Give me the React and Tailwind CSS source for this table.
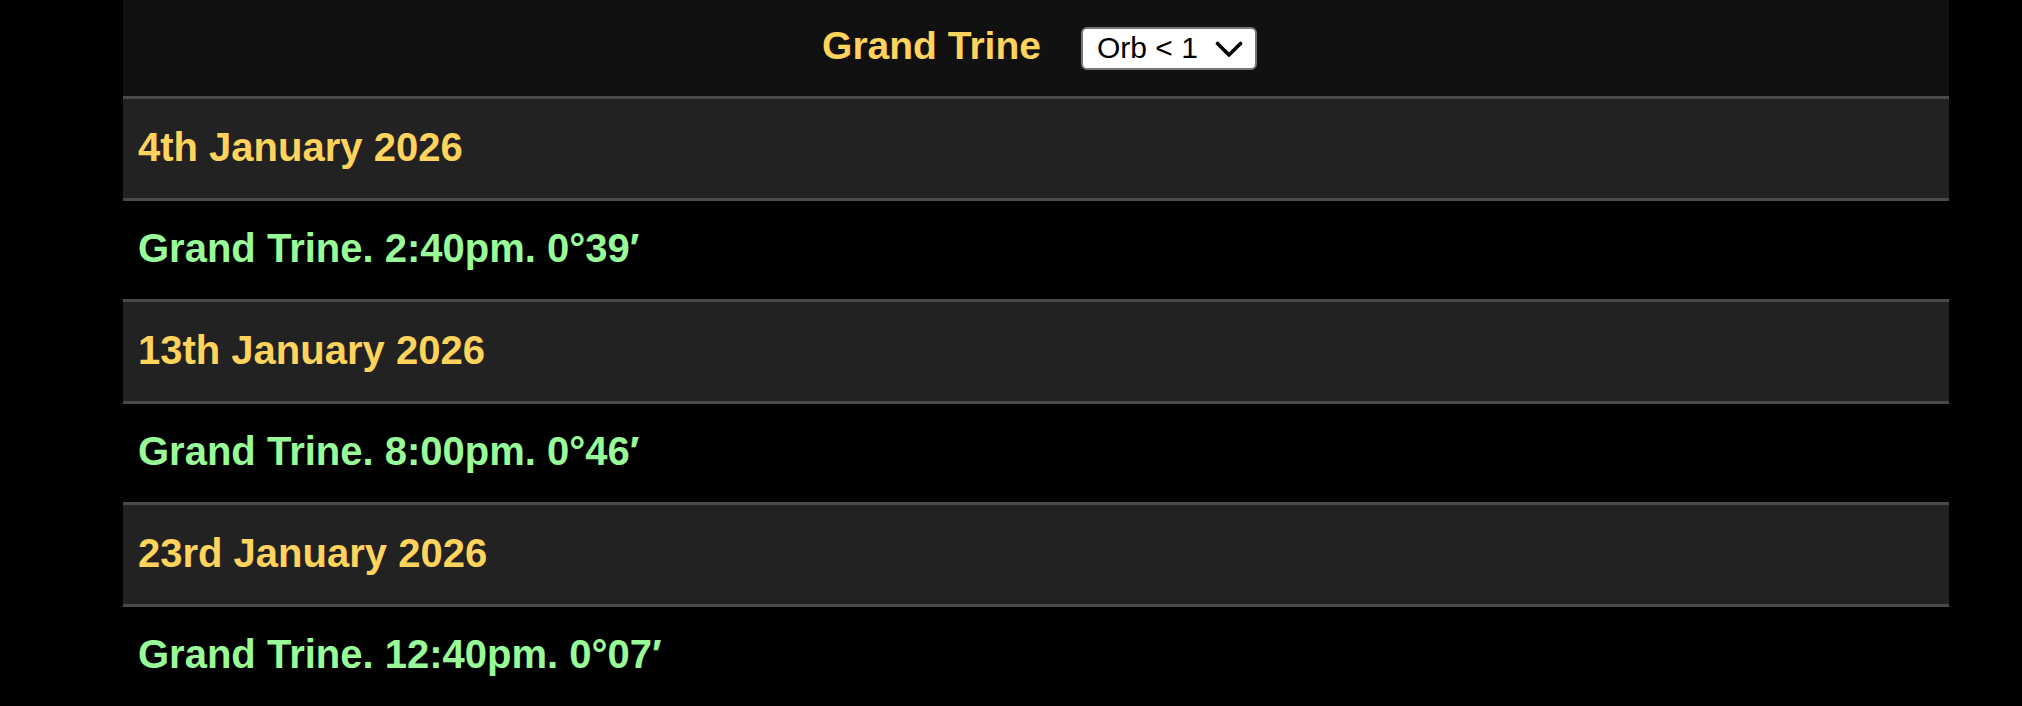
import React from "react";

const events = [
  { date: "4th January 2026", text: "Grand Trine. 2:40pm. 0°39′" },
  { date: "13th January 2026", text: "Grand Trine. 8:00pm. 0°46′" },
  { date: "23rd January 2026", text: "Grand Trine. 12:40pm. 0°07′" },
];

export default function App() {
  return (
    <div
      className="min-h-screen bg-black"
      style={{ fontFamily: '"Liberation Sans", Arial, sans-serif' }}
    >
      <div className="ml-[123px] w-[1826px]">
        <div className="flex h-[96px] items-center justify-center gap-[40px] bg-[#111111] pl-[7px]">
          <h1 className="text-[39px] font-bold leading-none text-[#ffd35c] -mt-[6px]">
            Grand Trine
          </h1>
          <div className="relative">
            <select
              defaultValue="1"
              className="h-[43px] w-[176px] appearance-none rounded-[6px] border-2 border-[#767676] bg-white pl-[14px] text-[30px] leading-none text-black outline-none"
            >
              <option value="1">Orb &lt; 1</option>
              <option value="2">Orb &lt; 2</option>
              <option value="3">Orb &lt; 3</option>
            </select>
            <svg
              className="pointer-events-none absolute right-[14px] top-[14px]"
              width="28"
              height="17"
              viewBox="0 0 28 17"
              fill="none"
            >
              <path
                d="M2.5 2.5 L14 14 L25.5 2.5"
                stroke="#000"
                strokeWidth="3.6"
                strokeLinecap="round"
                strokeLinejoin="round"
              />
            </svg>
          </div>
        </div>
        {events.map((e) => (
          <div key={e.date}>
            <div className="box-border flex h-[105px] items-center border-y-[3px] border-[#4a4a4a] bg-[#222222] px-[15px]">
              <h2 className="text-[40px] font-bold leading-none text-[#ffd35c] -mt-[4px]">
                {e.date}
              </h2>
            </div>
            <div className="flex h-[98px] items-center px-[15px]">
              <p className="text-[40px] font-bold leading-none text-[#98fb98] -mt-[4px]">
                {e.text}
              </p>
            </div>
          </div>
        ))}
      </div>
    </div>
  );
}
